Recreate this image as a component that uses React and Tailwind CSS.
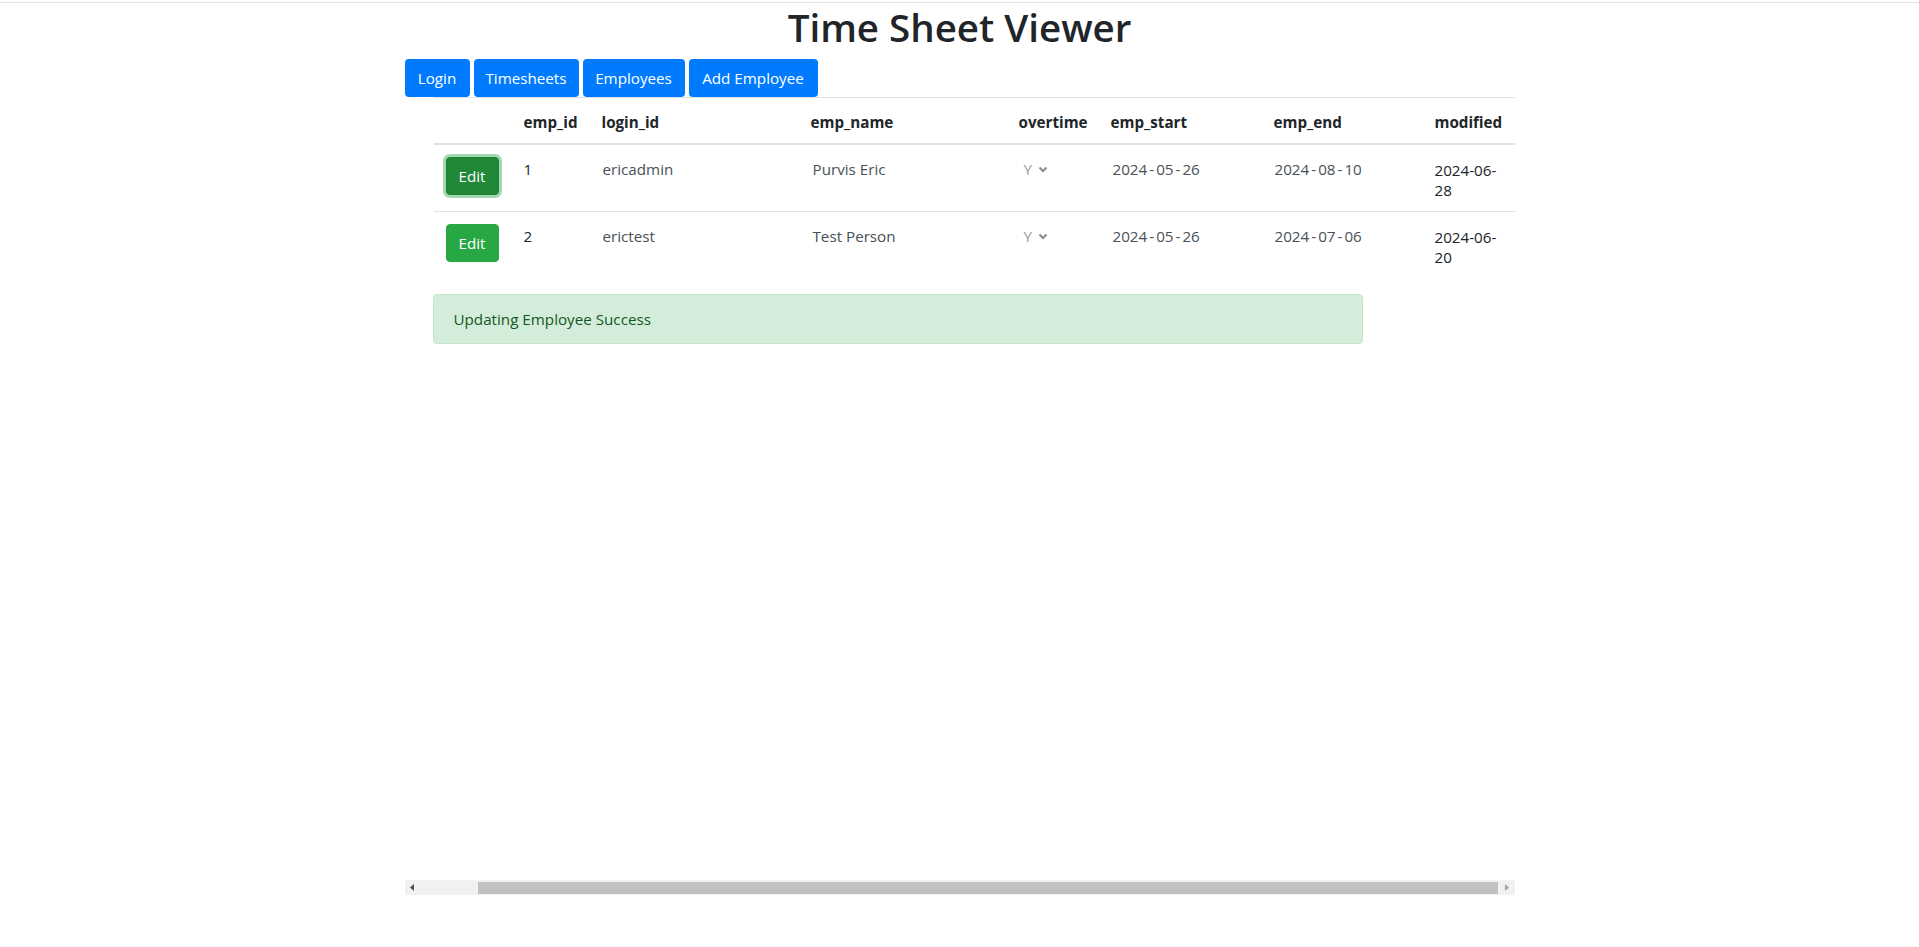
import React from "react";

const rows = [
  { id: 1, login: "ericadmin", name: "Purvis Eric", ot: "Y", start: "2024-05-26", end: "2024-08-10", mod1: "2024-06-", mod2: "28", active: true },
  { id: 2, login: "erictest", name: "Test Person", ot: "Y", start: "2024-05-26", end: "2024-07-06", mod1: "2024-06-", mod2: "20", active: false },
];

function DateText({ value }) {
  const [y, m, d] = value.split("-");
  return (
    <span className="whitespace-nowrap">
      {y}
      <span className="mx-[2px]">-</span>
      {m}
      <span className="mx-[2px]">-</span>
      {d}
    </span>
  );
}

function Chevron() {
  return (
    <svg width="10" height="7" viewBox="0 0 10 7" className="inline-block">
      <path d="M1.5 1.5 L5 5 L8.5 1.5" fill="none" stroke="#8a8a8a" strokeWidth="2" />
    </svg>
  );
}

export default function App() {
  return (
    <div className="min-h-screen bg-white font-['Segoe_UI','Open_Sans',sans-serif] text-[15.2px] text-[#212529]">
      <div className="mt-[2px] h-px bg-[#e2e2e2]" />
      <div className="mx-auto w-[1110px]">
        <h1 className="mb-2 text-center text-[38.5px] font-semibold leading-[48px] text-[#212529]">Time Sheet Viewer</h1>
        <div className="flex gap-[4px]">
          <button className="h-[38px] w-[65px] rounded-[4px] bg-[#007bff] leading-6 text-white">Login</button>
          <button className="h-[38px] w-[105px] rounded-[4px] bg-[#007bff] leading-6 text-white">Timesheets</button>
          <button className="h-[38px] w-[102px] rounded-[4px] bg-[#007bff] leading-6 text-white">Employees</button>
          <button className="h-[38px] w-[129px] rounded-[4px] bg-[#007bff] leading-6 text-white">Add Employee</button>
        </div>
        <div className="h-[783px] overflow-hidden">
          <div className="pl-[29px]">
            <table className="w-[1083px] table-fixed border-separate border-spacing-0 text-left">
              <colgroup>
                <col className="w-[78px]" />
                <col className="w-[78px]" />
                <col className="w-[209px]" />
                <col className="w-[208px]" />
                <col className="w-[92px]" />
                <col className="w-[163px]" />
                <col className="w-[161px]" />
                <col className="w-[94px]" />
              </colgroup>
              <thead>
                <tr>
                  {["", "emp_id", "login_id", "emp_name", "overtime", "emp_start", "emp_end", "modified"].map((h, i) => (
                    <th
                      key={i}
                      className="border-t border-b-2 border-t-[#dee2e6] border-b-[#dee2e6] px-3 pb-[10px] pt-[14px] align-top font-bold leading-[21px] text-[#212529]"
                    >
                      {h}
                    </th>
                  ))}
                </tr>
              </thead>
              <tbody>
                {rows.map((r, idx) => {
                  const bt = idx > 0 ? "border-t border-[#dee2e6]" : "";
                  return (
                    <tr key={r.id}>
                      <td className={`${bt} px-3 py-3 align-top`}>
                        {r.active ? (
                          <button className="h-[38px] w-[53px] rounded-[4px] border border-[#1e7e34] bg-[#218838] leading-6 text-white shadow-[0_0_0_3px_rgba(72,180,97,0.5)]">
                            Edit
                          </button>
                        ) : (
                          <button className="h-[38px] w-[53px] rounded-[4px] border border-[#28a745] bg-[#28a745] leading-6 text-white">
                            Edit
                          </button>
                        )}
                      </td>
                      <td className={`${bt} px-3 py-3 align-top leading-6 text-[#212529]`}>{r.id}</td>
                      <td className={`${bt} px-3 py-3 align-top leading-6 text-[#495057]`}>
                        <span className="pl-[1px]">{r.login}</span>
                      </td>
                      <td className={`${bt} px-3 py-3 align-top leading-6 text-[#495057]`}>
                        <span className="pl-[2px]">{r.name}</span>
                      </td>
                      <td className={`${bt} px-3 py-3 align-top leading-6`}>
                        <span className="inline-flex items-center gap-[6px] pl-[5px] text-[#9a9a9a]">
                          {r.ot}
                          <Chevron />
                        </span>
                      </td>
                      <td className={`${bt} px-3 py-3 align-top leading-6 text-[#495057]`}>
                        <span className="pl-[2px]">
                          <DateText value={r.start} />
                        </span>
                      </td>
                      <td className={`${bt} px-3 py-3 align-top leading-6 text-[#495057]`}>
                        <span className="pl-[1px]">
                          <DateText value={r.end} />
                        </span>
                      </td>
                      <td className={`${bt} px-3 pb-[11px] pt-[15px] align-top leading-[20px] text-[#212529]`}>
                        <div>{r.mod1}</div>
                        <div>{r.mod2}</div>
                      </td>
                    </tr>
                  );
                })}
              </tbody>
            </table>
            <div className="mt-4 w-[930px] -ml-px rounded-[4px] border border-[#c3e6cb] bg-[#d4edda] px-5 py-3 leading-6 text-[#155724]">
              Updating Employee Success
            </div>
          </div>
        </div>
        <div className="flex h-[15px] bg-[#f1f1f1]">
          <div className="flex w-[15px] items-center justify-center">
            <svg width="4" height="7" viewBox="0 0 4 7">
              <path d="M4 0 L0 3.5 L4 7 Z" fill="#505050" />
            </svg>
          </div>
          <div className="flex-1 pt-[2px]">
            <div className="ml-[58px] h-[12px] w-[1020px] bg-[#c1c1c1]" />
          </div>
          <div className="flex w-[15px] items-center justify-center">
            <svg width="4" height="7" viewBox="0 0 4 7">
              <path d="M0 0 L4 3.5 L0 7 Z" fill="#a3a3a3" />
            </svg>
          </div>
        </div>
      </div>
    </div>
  );
}
